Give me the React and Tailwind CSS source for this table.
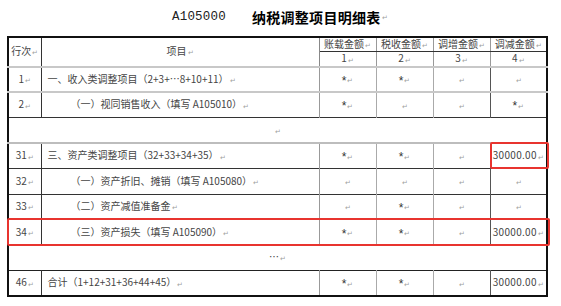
import React from "react";

const font = { fontFamily: '"Noto Sans CJK SC", "Noto Sans", sans-serif' };

function Ret() {
  return <span className="text-[7px] text-[#a0a0a0] align-middle ml-[1px]">↵</span>;
}

function Val({ v }) {
  if (v === "*") {
    return (
      <span className="text-[12px] text-[#333] relative top-[2px]" style={{ fontFamily: '"Liberation Sans", sans-serif' }}>
        *
      </span>
    );
  }
  return <span className="tracking-[0.3px]">{v}</span>;
}

const rows = [
  { no: "1", item: "一、收入类调整项目（2+3+…8+10+11）", sub: false, c: ["*", "*", "", ""], line: "border-b-[#c8c8c8] border-b-2" },
  { no: "2", item: "（一）视同销售收入（填写 A105010）", sub: true, c: ["*", "", "", "*"], line: "border-b-[#333]" },
  { blank: true, text: "", line: "border-b-[#bdbdbd] border-b-2" },
  { no: "31", item: "三、资产类调整项目（32+33+34+35）", sub: false, c: ["*", "*", "", "30000.00"], line: "border-b-[#333]", mark: true },
  { no: "32", item: "（一）资产折旧、摊销（填写 A105080）", sub: true, c: ["", "", "", ""], line: "border-b-[#333]" },
  { no: "33", item: "（二）资产减值准备金", sub: true, c: ["", "*", "", ""], line: "border-b-[#333]" },
  { no: "34", item: "（三）资产损失（填写 A105090）", sub: true, c: ["*", "*", "", "30000.00"], line: "border-b-[#333]", rowMark: true },
  { blank: true, text: "…", line: "border-b-[#222]" },
  { no: "46", item: "合计（1+12+31+36+44+45）", sub: false, c: ["*", "*", "", "30000.00"], line: "" },
];

const amountHeads = ["账载金额", "税收金额", "调增金额", "调减金额"];

export default function App() {
  return (
    <div className="w-[561px] h-[306px] bg-white text-[#454545] overflow-hidden" style={font}>
      {/* Title */}
      <div className="h-[36px] flex items-center pl-[172px] pb-[2px]">
        <span className="text-[12.5px] text-[#222] tracking-[0.2px]" style={{ fontFamily: '"Liberation Mono", monospace' }}>
          A105000
        </span>
        <span className="ml-[26px] text-[14px] font-bold text-black tracking-[0.3px]">纳税调整项目明细表</span>
        <Ret />
      </div>

      {/* Table */}
      <div className="ml-[7px] w-[541px]">
        <table className="w-full table-fixed border-collapse border-2 border-[#111] text-[10px] leading-[12px]">
          <colgroup>
            <col className="w-[33px]" />
            <col className="w-[278px]" />
            <col className="w-[57px]" />
            <col className="w-[57px]" />
            <col className="w-[57px]" />
            <col className="w-[57px]" />
          </colgroup>
          <thead>
            <tr className="h-[14px]">
              <td rowSpan={2} className="p-0 border-r border-[#333] border-b-2 border-b-[#c8c8c8] text-center align-middle">
                行次<Ret />
              </td>
              <td rowSpan={2} className="p-0 border-r border-[#888] border-b-2 border-b-[#c8c8c8] text-center align-middle">
                项目<Ret />
              </td>
              {amountHeads.map((h, i) => (
                <td
                  key={h}
                  className={`p-0 text-center border-b border-b-[#333] ${i < 3 ? "border-r border-r-[#999]" : ""}`}
                >
                  {h}
                  <Ret />
                </td>
              ))}
            </tr>
            <tr className="h-[14px]">
              {[1, 2, 3, 4].map((n, i) => (
                <td
                  key={n}
                  className={`p-0 text-center border-b-2 border-b-[#c8c8c8] ${i < 3 ? "border-r border-r-[#999]" : ""}`}
                >
                  {n}
                  <Ret />
                </td>
              ))}
            </tr>
          </thead>
          <tbody>
            {rows.map((r, idx) =>
              r.blank ? (
                <tr key={idx} className={`h-[25.5px] border-b ${r.line}`}>
                  <td colSpan={6} className="p-0 text-center align-middle">
                    {r.text}
                    <Ret />
                  </td>
                </tr>
              ) : (
                <tr key={idx} className={`h-[25.5px] border-b ${r.line}`}>
                  <td className="relative p-0 border-r border-r-[#333] text-center align-middle">
                    {r.no}
                    <Ret />
                    {r.rowMark && (
                      <div className="absolute -left-[2px] -top-[2px] w-[543px] h-[calc(100%+3px)] border-2 border-[#e8342f] rounded-[2px]" />
                    )}
                  </td>
                  <td className={`p-0 border-r border-r-[#999] align-middle ${r.sub ? "pl-[29px]" : "pl-[6px]"}`}>
                    {r.item}
                    <Ret />
                  </td>
                  {r.c.map((v, i) => (
                    <td
                      key={i}
                      className={`relative p-0 text-center align-middle ${i < 2 ? "border-r border-r-[#aaa]" : i === 2 ? "border-r border-r-[#555]" : ""}`}
                    >
                      <Val v={v} />
                      <Ret />
                      {r.mark && i === 3 && (
                        <div className="absolute -left-[1px] -top-[2px] w-[59px] h-[calc(100%+3px)] border-2 border-[#e8342f] rounded-[2px]" />
                      )}
                    </td>
                  ))}
                </tr>
              )
            )}
          </tbody>
        </table>
      </div>
    </div>
  );
}
